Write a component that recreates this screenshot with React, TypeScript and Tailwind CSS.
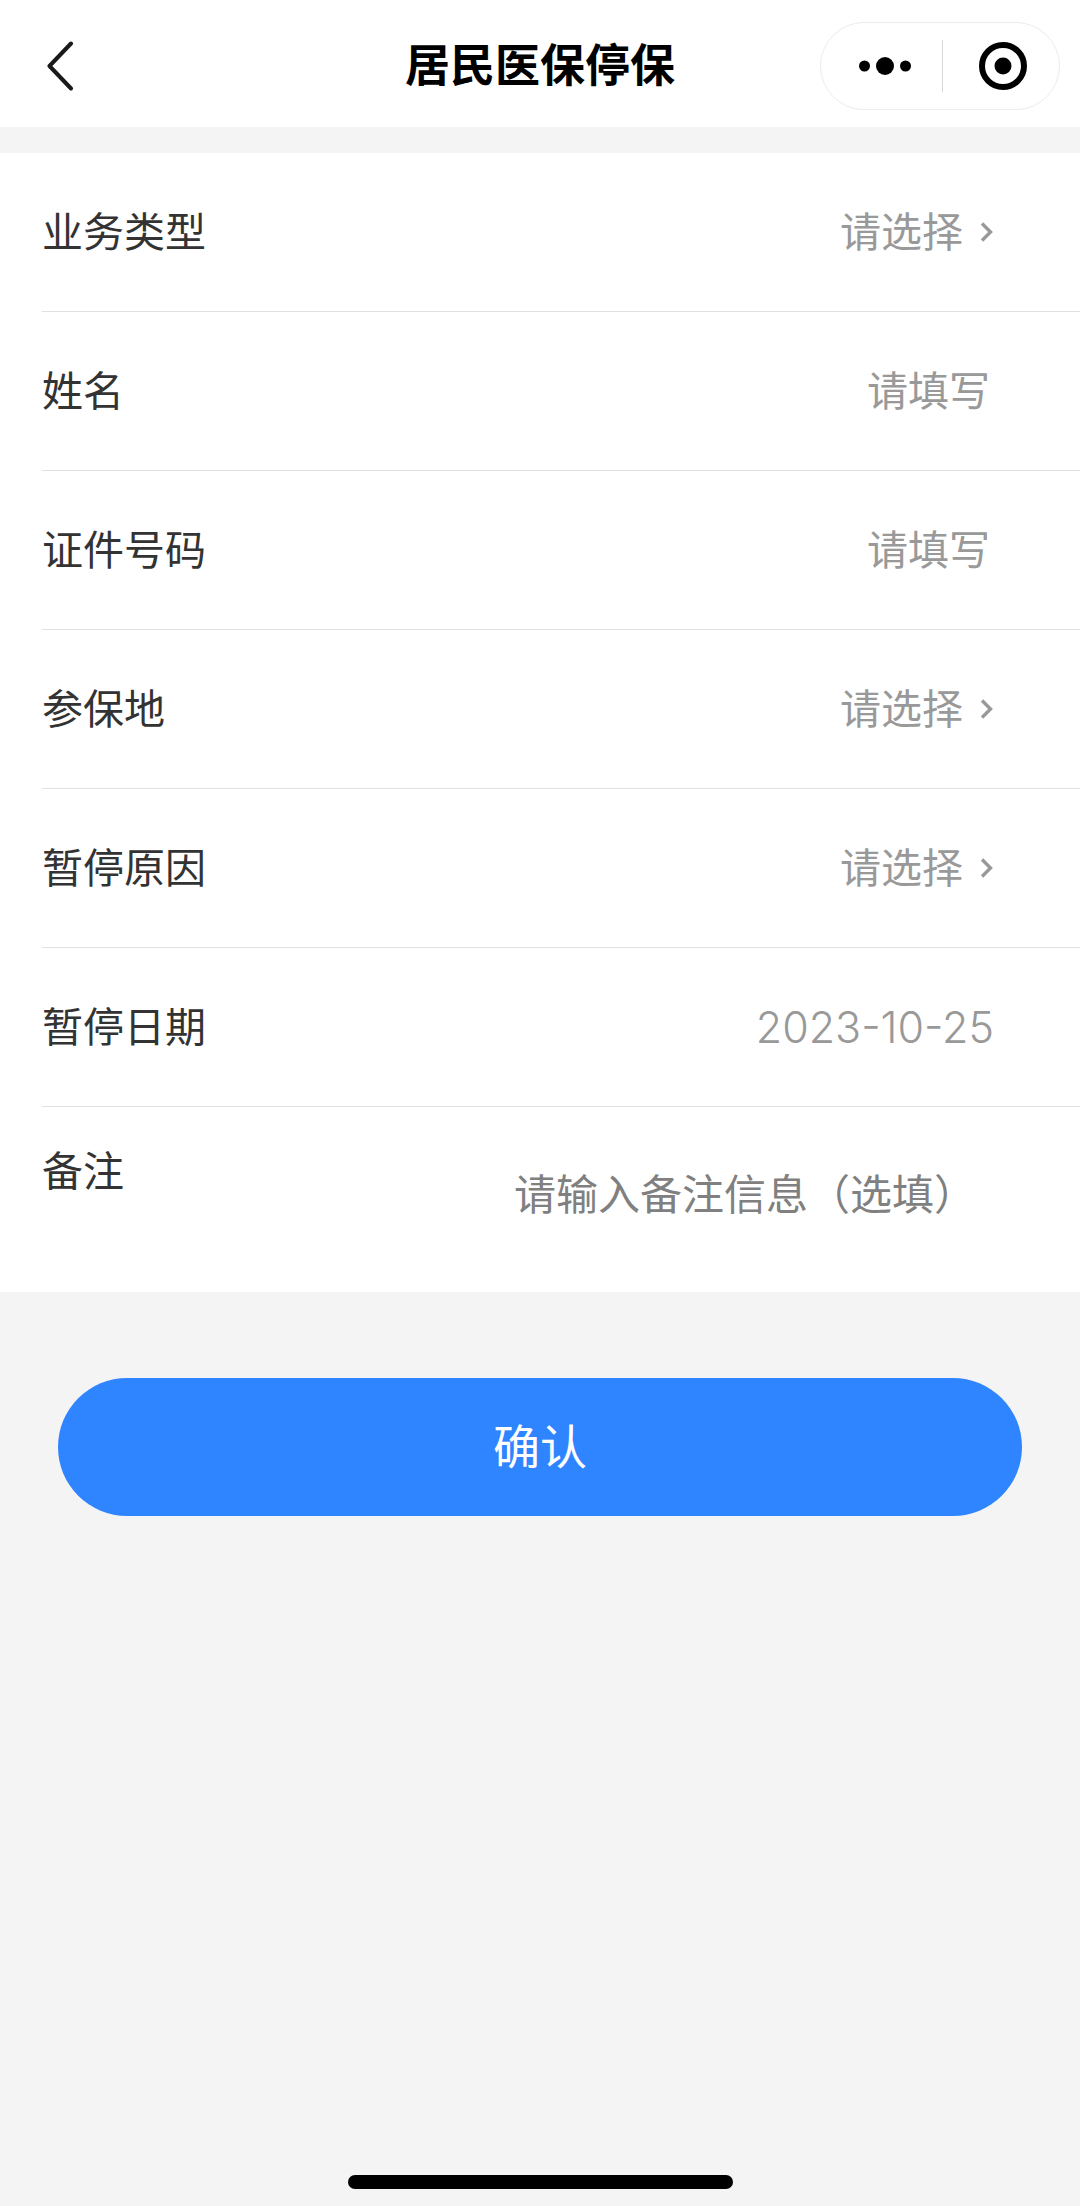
import React, { useState } from "react";

interface FormData {
  type: string;
  name: string;
  idNumber: string;
  area: string;
  reason: string;
  date: string;
  remark: string;
}

interface FieldProps {
  id: keyof FormData;
  label: string;
  value: string;
  onChange: (
    e: React.ChangeEvent<
      HTMLInputElement | HTMLTextAreaElement | HTMLSelectElement
    >
  ) => void;
}

const rowClass =
  "ml-[42px] flex h-[159px] items-center justify-between border-b border-[#e0e0e0]";
const labelClass = "shrink-0 text-[41px] leading-[60px] text-[#333333]";

const SelectRow: React.FC<FieldProps & { options: string[] }> = ({
  id,
  label,
  value,
  onChange,
  options,
}) => (
  <div className={`${rowClass} pr-[86px]`}>
    <label htmlFor={id} className={labelClass}>
      {label}
    </label>
    <div className="flex items-center gap-[17px]">
      <select
        id={id}
        name={id}
        value={value}
        onChange={onChange}
        className="appearance-none bg-transparent text-[41px] leading-[60px] text-[#999999] outline-none [field-sizing:content]"
      >
        <option value="">请选择</option>
        {options.map((option) => (
          <option key={option} value={option}>
            {option}
          </option>
        ))}
      </select>
      <svg width="14" height="20" viewBox="0 0 14 20" fill="none">
        <path d="M2 1.5L10.5 10L2 18.5" stroke="#999999" strokeWidth="3.4" />
      </svg>
    </div>
  </div>
);

const InputRow: React.FC<
  FieldProps & { placeholder?: string; inputClass: string }
> = ({ id, label, value, onChange, placeholder, inputClass }) => (
  <div className={`${rowClass} gap-8`}>
    <label htmlFor={id} className={labelClass}>
      {label}
    </label>
    <input
      type="text"
      id={id}
      name={id}
      value={value}
      onChange={onChange}
      placeholder={placeholder}
      className={`min-w-0 flex-1 bg-transparent text-right leading-[60px] text-[#999999] outline-none placeholder:text-[#999999] ${inputClass}`}
    />
  </div>
);

const App: React.FC = () => {
  const [formData, setFormData] = useState<FormData>({
    type: "",
    name: "",
    idNumber: "",
    area: "",
    reason: "",
    date: "2023-10-25",
    remark: "",
  });

  const handleChange: FieldProps["onChange"] = (e) => {
    setFormData({ ...formData, [e.target.name]: e.target.value });
  };

  return (
    <div className="flex min-h-screen flex-col bg-[#f4f4f4] font-[Inter,'Noto_Sans_CJK_SC',sans-serif]">
      {/* Nav bar */}
      <header className="grid h-[127px] grid-cols-[1fr_auto_1fr] items-center bg-white px-5 pt-1">
        <button
          type="button"
          aria-label="返回"
          className="justify-self-start pl-[22px]"
        >
          <svg width="36" height="50" viewBox="0 0 36 50" fill="none">
            <path
              d="M29 2.5L7.5 25L29 47.5"
              stroke="#1a1a1a"
              strokeWidth="4"
              strokeLinejoin="round"
              strokeLinecap="round"
            />
          </svg>
        </button>
        <h1 className="text-[45px] leading-[60px] font-bold text-black">
          居民医保停保
        </h1>
        {/* Mini program capsule */}
        <div className="flex h-[88px] w-[240px] items-center justify-self-end rounded-full border border-[#ececec]">
          <button
            type="button"
            aria-label="更多"
            className="flex flex-1 justify-center pl-2"
          >
            <svg width="52" height="18" viewBox="0 0 52 18">
              <circle cx="5.5" cy="9" r="5.5" />
              <circle cx="26" cy="9" r="9" />
              <circle cx="46.5" cy="9" r="5.5" />
            </svg>
          </button>
          <div className="h-[52px] w-px bg-[#d8d8d8]" />
          <button
            type="button"
            aria-label="关闭"
            className="flex flex-1 justify-center pl-1"
          >
            <svg width="48" height="48" viewBox="0 0 48 48">
              <circle
                cx="24"
                cy="24"
                r="21"
                fill="none"
                stroke="#000"
                strokeWidth="6"
              />
              <circle cx="24" cy="24" r="8.5" />
            </svg>
          </button>
        </div>
      </header>

      <form onSubmit={(e) => e.preventDefault()} className="mt-[26px]">
        <div className="bg-white">
          <SelectRow
            id="type"
            label="业务类型"
            value={formData.type}
            onChange={handleChange}
            options={[]}
          />
          <InputRow
            id="name"
            label="姓名"
            value={formData.name}
            onChange={handleChange}
            placeholder="请填写"
            inputClass="pr-[90px] text-[41px]"
          />
          <InputRow
            id="idNumber"
            label="证件号码"
            value={formData.idNumber}
            onChange={handleChange}
            placeholder="请填写"
            inputClass="pr-[90px] text-[41px]"
          />
          <SelectRow
            id="area"
            label="参保地"
            value={formData.area}
            onChange={handleChange}
            options={[]}
          />
          <SelectRow
            id="reason"
            label="暂停原因"
            value={formData.reason}
            onChange={handleChange}
            options={[]}
          />
          <InputRow
            id="date"
            label="暂停日期"
            value={formData.date}
            onChange={handleChange}
            inputClass="pr-[86px] text-[43px] font-light"
          />

          {/* Remark */}
          <div className="ml-[42px] flex h-[185px] items-start justify-between pt-[34px]">
            <label htmlFor="remark" className={labelClass}>
              备注
            </label>
            <textarea
              id="remark"
              name="remark"
              value={formData.remark}
              onChange={handleChange}
              placeholder="请输入备注信息（选填）"
              className="mt-6 mr-[76px] h-[100px] w-[490px] resize-none bg-transparent text-[42px] leading-[60px] text-[#808080] outline-none placeholder:text-[#808080]"
            />
          </div>
        </div>

        {/* Submit */}
        <div className="px-[58px] pt-[86px]">
          <button
            type="submit"
            className="h-[138px] w-full rounded-full bg-[#2f84ff] text-[47px] leading-[60px] text-white"
          >
            确认
          </button>
        </div>
      </form>

      {/* Home indicator */}
      <div className="mt-auto flex justify-center pb-[17px]">
        <div className="h-[14px] w-[385px] rounded-full bg-black" />
      </div>
    </div>
  );
};

export default App;
